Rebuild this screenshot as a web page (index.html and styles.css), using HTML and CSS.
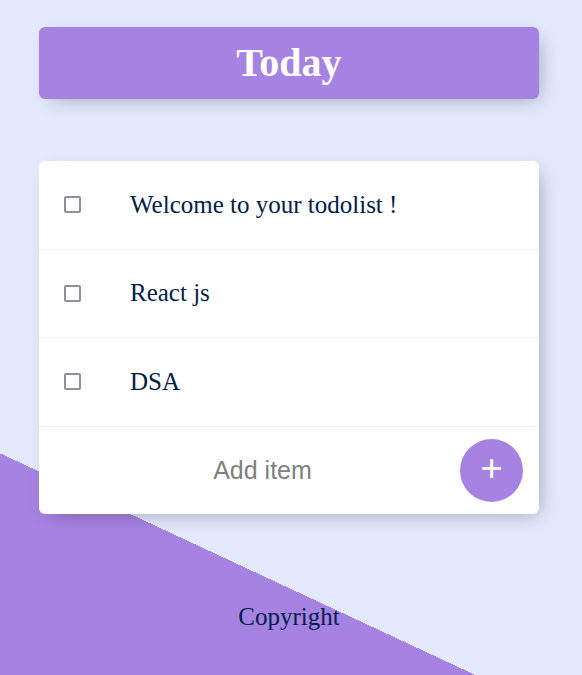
FILE: index.html
```html
<!DOCTYPE html>
<html lang="en">
<head>
<meta charset="utf-8">
<title>To-Do List</title>
<link rel="stylesheet" href="styles.css">
</head>
<body>
  <div class="heading">
    <h1 class="heading-title">Today</h1>
  </div>

  <div class="box">
    <div class="item">
      <input class="check" type="checkbox">
      <p class="item-text">Welcome to your todolist !</p>
    </div>
    <div class="item">
      <input class="check" type="checkbox">
      <p class="item-text">React js</p>
    </div>
    <div class="item">
      <input class="check" type="checkbox">
      <p class="item-text">DSA</p>
    </div>
    <form class="item add-form">
      <input class="add-input" type="text" placeholder="Add item">
      <button class="add-btn" type="button">+</button>
    </form>
  </div>

  <footer class="footer">
    <p class="footer-text">Copyright</p>
  </footer>
</body>
</html>
```

FILE: styles.css
```css
html {
  background-color: #E4E9FD;
  background-image: linear-gradient(25deg, #A683E3 50%, #E4E9FD 50%);
  background-size: 100% 1178px;
  background-repeat: no-repeat;
  min-height: 100%;
}

body {
  margin: 0;
  padding: 27px 4px 0 0;
  font-family: "Liberation Serif", "Times New Roman", serif;
}

.heading {
  width: 500px;
  margin: 0 auto;
  background-color: #A683E3;
  border-radius: 6px;
  box-shadow: 6px 6px 19px -6px rgba(0, 0, 0, 0.3);
  text-align: center;
}

.heading-title {
  margin: 0;
  padding: 12px 0 13px;
  font-size: 40px;
  line-height: 47px;
  font-weight: bold;
  color: #fff;
}

.box {
  width: 500px;
  margin: 62px auto 0;
  background: #fff;
  border-radius: 6px;
  box-shadow: 6px 6px 19px -6px rgba(0, 0, 0, 0.3);
}

.item {
  height: 87.5px;
  display: flex;
  align-items: center;
  border-bottom: 1px solid #F1F1F1;
  box-sizing: content-box;
}

.item:last-child {
  border-bottom: 0;
}

.check {
  appearance: none;
  -webkit-appearance: none;
  flex: none;
  width: 17px;
  height: 17px;
  margin: 0 24px 0 25px;
  box-sizing: border-box;
  border: 2px solid #8f8f9d;
  border-radius: 2px;
  background: #fff;
}

.item-text {
  margin: 0;
  padding: 0 25px;
  font-size: 25px;
  color: #00204a;
}

.add-form {
  margin: 0;
  padding: 0 16px 0 37px;
}

.add-input {
  flex: 1;
  min-width: 0;
  height: 60px;
  border: none;
  padding: 0;
  margin: 0;
  text-align: center;
  font-family: "Liberation Sans", Arial, sans-serif;
  font-size: 25px;
  color: #333;
  background: transparent;
  outline: none;
}

.add-input::placeholder {
  color: grey;
  opacity: 1;
}

.add-btn {
  flex: none;
  width: 63px;
  height: 63px;
  margin-left: 11px;
  border: 0;
  border-radius: 50%;
  background-color: #A683E3;
  color: #fff;
  font-family: "Liberation Sans", Arial, sans-serif;
  font-size: 38px;
  line-height: 1;
  padding: 0 0 4px;
  display: flex;
  align-items: center;
  justify-content: center;
}

.footer {
  margin-top: 64px;
  text-align: center;
}

.footer-text {
  margin: 0;
  padding: 25px;
  font-size: 25px;
  color: #00204a;
}
```
